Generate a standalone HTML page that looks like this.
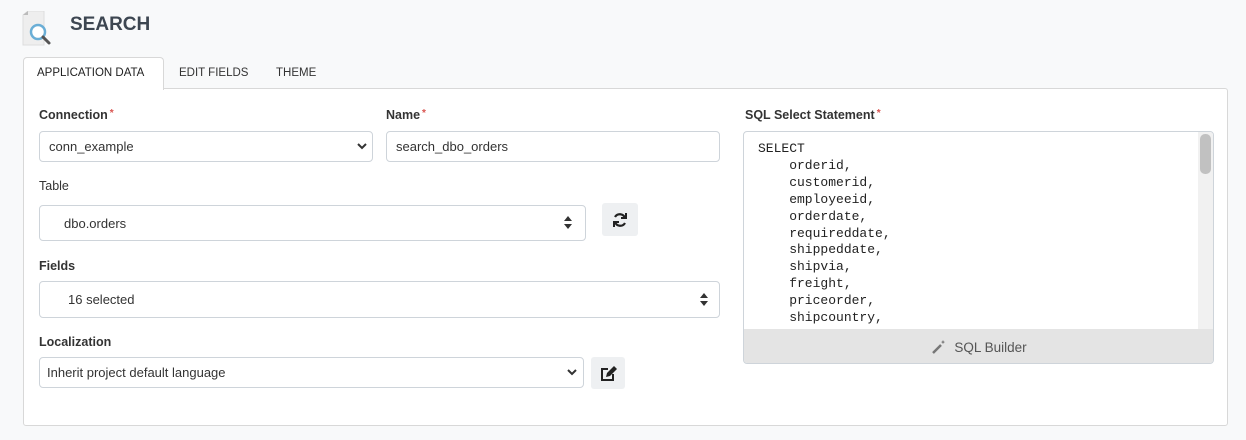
<!DOCTYPE html>
<html><head><style>
*{box-sizing:border-box;margin:0;padding:0}
body{width:1246px;height:440px;background:#f8f9fa;font-family:"Liberation Sans",sans-serif;color:#222;position:relative;overflow:hidden}
.a{position:absolute}
.lbl{font-size:12.5px;font-weight:bold;color:#333}
.lbl2{font-size:12.5px;color:#333}
.req{color:#d9534f;font-size:10px;vertical-align:top;margin-left:2px}
.inp{background:#fff;border:1px solid #ced4da;border-radius:4px;font-size:13px;color:#333;display:flex;align-items:center;padding-left:9px}
.btn{background:#eef0f2;border-radius:3px;display:flex;align-items:center;justify-content:center}
.sql{font-family:"Liberation Mono",monospace;font-size:13px;line-height:16.9px;color:#222;white-space:pre}
</style></head><body>
<svg class="a" style="left:22px;top:11px" width="36" height="36" viewBox="0 0 36 36">
<path d="M1 4 L6 0 H22 V34 H1Z" fill="#eee" stroke="#ddd"/><path d="M1 4 L6 0 V4Z" fill="#bbb"/>
<circle cx="16" cy="21" r="7" fill="#fff" stroke="#6aaed6" stroke-width="2.5"/>
<path d="M21 26 L27 32" stroke="#555" stroke-width="3" stroke-linecap="round"/></svg>
<div class="a" style="left:70px;top:14px;font-size:19px;font-weight:bold;color:#3d4651">SEARCH</div>
<div class="a" style="left:23px;top:88px;width:1205px;height:338px;background:#fff;border:1px solid #d8d8d8;border-radius:0 3px 3px 3px"></div>
<div class="a" style="left:23px;top:57px;width:141px;height:33px;background:#fff;border:1px solid #d8d8d8;border-bottom:none;border-radius:4px 4px 0 0"></div>
<div class="a" style="left:37px;top:67px;font-size:11.5px;color:#222">APPLICATION DATA</div>
<div class="a" style="left:179px;top:67px;font-size:11.5px;color:#333">EDIT FIELDS</div>
<div class="a" style="left:276px;top:67px;font-size:11.5px;color:#333">THEME</div>

<div class="a lbl" style="left:39px;top:108px">Connection<span class="req">*</span></div>
<div class="a inp" style="left:39px;top:131px;width:334px;height:31px">conn_example</div>
<svg class="a" style="left:357px;top:143px" width="10" height="7"><path d="M1 1l4 4 4-4" stroke="#333" stroke-width="2" fill="none"/></svg>
<div class="a lbl" style="left:386px;top:108px">Name<span class="req">*</span></div>
<div class="a inp" style="left:386px;top:131px;width:334px;height:31px">search_dbo_orders</div>

<div class="a lbl2" style="left:39px;top:179px">Table</div>
<div class="a inp" style="left:39px;top:205px;width:547px;height:36px;padding-left:24px">dbo.orders</div>
<svg class="a" style="left:564px;top:216px" width="8" height="13"><path d="M0 5L4 0L8 5Z M0 8L4 13L8 8Z" fill="#333"/></svg>
<div class="a btn" style="left:602px;top:203px;width:36px;height:33px">
<svg width="16" height="16" viewBox="0 0 16 16" fill="none" stroke="#222" stroke-width="2.2"><path d="M13 6A5.5 5.5 0 0 0 3 5"/><path d="M3 10A5.5 5.5 0 0 0 13 11"/><path d="M14 1v5h-5" stroke-width="2"/><path d="M2 15v-5h5" stroke-width="2"/></svg></div>

<div class="a lbl" style="left:39px;top:259px">Fields</div>
<div class="a inp" style="left:39px;top:281px;width:681px;height:37px;padding-left:28px">16 selected</div>
<svg class="a" style="left:700px;top:293px" width="8" height="13"><path d="M0 5L4 0L8 5Z M0 8L4 13L8 8Z" fill="#333"/></svg>

<div class="a lbl" style="left:39px;top:335px">Localization</div>
<div class="a inp" style="left:39px;top:357px;width:545px;height:31px;padding-left:7px">Inherit project default language</div>
<svg class="a" style="left:567px;top:369px" width="10" height="7"><path d="M1 1l4 4 4-4" stroke="#333" stroke-width="2" fill="none"/></svg>
<div class="a btn" style="left:591px;top:357px;width:34px;height:32px">
<svg width="17" height="17" viewBox="0 0 17 17"><path d="M1 3h7v2H3v9h9V9h2v7H1Z" fill="#222"/><path d="M6 12l1-4 7-7 3 3-7 7Z" fill="#222"/></svg></div>

<div class="a lbl" style="left:745px;top:108px">SQL Select Statement<span class="req">*</span></div>
<div class="a" style="left:743px;top:131px;width:471px;height:233px;border:1px solid #ced4da;border-radius:4px;background:#fff;overflow:hidden">
<div class="sql a" style="left:14px;top:9px">SELECT
    orderid,
    customerid,
    employeeid,
    orderdate,
    requireddate,
    shippeddate,
    shipvia,
    freight,
    priceorder,
    shipcountry,</div>
<div class="a" style="right:0;top:0;width:15px;height:197px;background:#f1f1f1"><div style="margin:2px 2px;width:11px;height:40px;background:#c1c1c1;border-radius:5px"></div></div>
<div class="a" style="left:0;top:197px;width:471px;height:36px;background:#e4e4e4;display:flex;align-items:center;justify-content:center;font-size:13.5px;color:#555">
<svg width="14" height="14" viewBox="0 0 14 14" style="margin-right:8px"><path d="M1 13L9 5" stroke="#777" stroke-width="2.5"/><path d="M11 0l.7 1.5L13 2l-1.3.7L11 4l-.7-1.3L9 2l1.3-.5Z" fill="#777"/></svg>SQL Builder</div>
</div>
</body></html>
